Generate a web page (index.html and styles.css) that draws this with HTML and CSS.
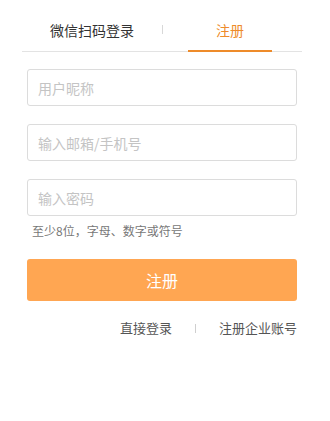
FILE: index.html
```html
<!DOCTYPE html>
<html lang="zh-CN">
<head>
<meta charset="utf-8">
<title>注册</title>
<link rel="stylesheet" href="styles.css">
</head>
<body>
<div class="wrap">
  <div class="tabs">
    <div class="tab tab-left">微信扫码登录</div>
    <div class="tab-sep"></div>
    <div class="tab tab-right active">注册</div>
  </div>
  <form class="form">
    <input class="field" type="text" placeholder="用户昵称">
    <input class="field" type="text" placeholder="输入邮箱/手机号">
    <input class="field" type="password" placeholder="输入密码">
    <div class="hint">至少8位，字母、数字或符号</div>
    <button class="submit" type="button">注册</button>
    <div class="links">
      <a class="link">直接登录</a>
      <span class="link-sep"></span>
      <a class="link">注册企业账号</a>
    </div>
  </form>
</div>
</body>
</html>
```

FILE: styles.css
```css
* { box-sizing: border-box; }
html, body { margin: 0; padding: 0; background: #fff; }
body {
  font-family: "Noto Sans CJK SC", "Noto Sans", "Liberation Sans", sans-serif;
  color: #333;
}
.wrap {
  width: 280px;
  margin-left: 22px;
}
.tabs {
  display: flex;
  align-items: flex-start;
  border-bottom: 1px solid #e3e3e3;
  height: 52px;
}
.tab {
  position: relative;
  font-size: 14px;
  line-height: 20px;
  padding-top: 20px;
  height: 51px;
  text-align: center;
}
.tab-left { width: 140px; color: #333; }
.tab-right { width: 134px; color: #ee8b2a; }
.tab-sep {
  width: 1px;
  height: 9px;
  margin-top: 25px;
  background: #d8d8d8;
}
.tab.active::after {
  content: "";
  position: absolute;
  left: 25px;
  right: 25px;
  bottom: -1px;
  height: 2px;
  background: #ee8b2a;
}
.form {
  display: flex;
  flex-direction: column;
  padding: 17px 5px 0;
}
.field {
  display: block;
  width: 270px;
  height: 37px;
  margin: 0 0 18px;
  padding: 0 10px;
  border: 1px solid #dcdcdc;
  border-radius: 3px;
  font-family: inherit;
  font-size: 14px;
  color: #333;
  outline: none;
}
.field::placeholder { color: #c4c4c4; }
.field:nth-of-type(3) { margin-bottom: 7px; }
.hint {
  font-size: 12px;
  line-height: 16px;
  color: #777;
  padding-left: 5px;
}
.submit {
  margin-top: 20px;
  width: 270px;
  height: 42px;
  border: 0;
  border-radius: 3px;
  background: #ffa652;
  color: #fff;
  font-family: inherit;
  font-size: 16px;
  cursor: pointer;
}
.links {
  margin-top: 17px;
  display: flex;
  justify-content: flex-end;
  align-items: center;
  font-size: 13px;
  line-height: 20px;
  color: #555;
}
.link { color: #555; cursor: pointer; }
.link-sep {
  width: 1px;
  height: 9px;
  margin: 0 23px;
  background: #cfcfcf;
}
```
